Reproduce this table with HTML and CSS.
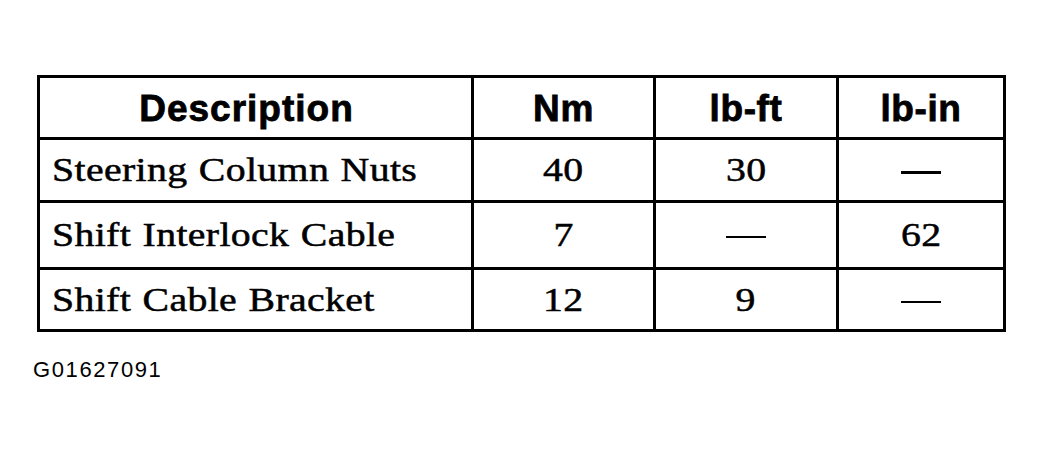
FILE: index.html
```html
<!DOCTYPE html>
<html>
<head>
<meta charset="utf-8">
<link rel="stylesheet" href="styles.css">
</head>
<body>
<div class="figure">
  <div class="torque">
    <div class="cell head desc">Description</div>
    <div class="cell head">Nm</div>
    <div class="cell head">lb-ft</div>
    <div class="cell head">lb-in</div>

    <div class="cell name"><span class="txt">Steering Column Nuts</span></div>
    <div class="cell num"><span class="txt">40</span></div>
    <div class="cell num"><span class="txt">30</span></div>
    <div class="cell num"><span class="dash"></span></div>

    <div class="cell name"><span class="txt">Shift Interlock Cable</span></div>
    <div class="cell num"><span class="txt">7</span></div>
    <div class="cell num"><span class="dash thin"></span></div>
    <div class="cell num"><span class="txt">62</span></div>

    <div class="cell name"><span class="txt">Shift Cable Bracket</span></div>
    <div class="cell num"><span class="txt">12</span></div>
    <div class="cell num"><span class="txt">9</span></div>
    <div class="cell num"><span class="dash mid"></span></div>
  </div>
  <div class="code">G01627091</div>
</div>
</body>
</html>
```

FILE: styles.css
```css
html, body {
  margin: 0;
  padding: 0;
  background: #fff;
}
.figure {
  padding: 75px 0 0 37px;
}
.torque {
  display: grid;
  width: 969px;
  box-sizing: border-box;
  grid-template-columns: 431px 179px 180px 164px;
  grid-template-rows: 59px 60px 64px 59px;
  gap: 3px;
  padding: 3px;
  background: #000;
}
.cell {
  background: #fff;
  color: #000;
  display: flex;
  align-items: center;
}
.head {
  justify-content: center;
  font-family: "Liberation Sans", Arial, sans-serif;
  font-weight: bold;
  font-size: 37px;
  letter-spacing: 0.6px;
  -webkit-text-stroke: 0.8px #000;
  padding-top: 2px;
}
.head.desc {
  padding-right: 18px;
  letter-spacing: 1px;
}
.name, .num {
  font-family: "Liberation Serif", "Times New Roman", serif;
  font-size: 34px;
  letter-spacing: 0.3px;
  word-spacing: 1px;
  -webkit-text-stroke: 0.5px #000;
}
.txt {
  display: inline-block;
  transform: scaleX(1.17);
}
.name {
  padding-left: 12px;
}
.name .txt {
  transform-origin: left center;
}
.num {
  justify-content: center;
}
.num .txt {
  transform-origin: center center;
}
.dash {
  display: block;
  width: 40px;
  height: 3px;
  margin-top: 4px;
  background: #000;
}
.dash.thin {
  height: 2px;
}
.dash.mid {
  height: 2px;
}
.code {
  margin-top: 25px;
  margin-left: -4px;
  font-family: "Liberation Sans", Arial, sans-serif;
  font-size: 22px;
  letter-spacing: 1.6px;
  color: #000;
}
```
